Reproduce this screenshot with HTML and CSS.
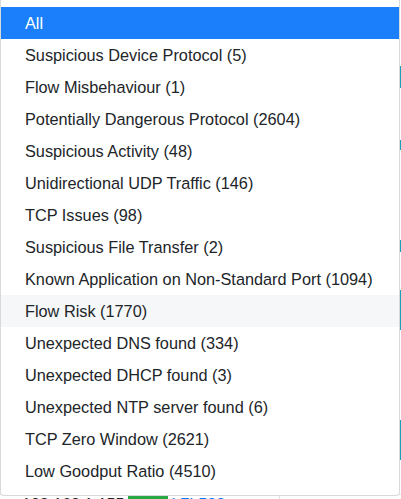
FILE: index.html
```html
<!DOCTYPE html>
<html>
<head>
<meta charset="utf-8">
<link rel="stylesheet" href="styles.css">
</head>
<body>
<div class="page">
  <div class="edge-right">
    <span class="tick t1"></span><span class="tick t2"></span><span class="tick t3"></span><span class="tick t4"></span><span class="tick t5"></span>
  </div>
  <div class="bottom-row">
    <span class="ip">192.168.1.155</span>
    <span class="badge">Local</span>
    <span class="mac">b7b533</span>
    <span class="sep"></span>
  </div>
</div>
<div class="menu">
  <div class="item active">All</div>
  <div class="item">Suspicious Device Protocol (5)</div>
  <div class="item">Flow Misbehaviour (1)</div>
  <div class="item">Potentially Dangerous Protocol (2604)</div>
  <div class="item">Suspicious Activity (48)</div>
  <div class="item">Unidirectional UDP Traffic (146)</div>
  <div class="item">TCP Issues (98)</div>
  <div class="item">Suspicious File Transfer (2)</div>
  <div class="item">Known Application on Non-Standard Port (1094)</div>
  <div class="item hover">Flow Risk (1770)</div>
  <div class="item">Unexpected DNS found (334)</div>
  <div class="item">Unexpected DHCP found (3)</div>
  <div class="item">Unexpected NTP server found (6)</div>
  <div class="item">TCP Zero Window (2621)</div>
  <div class="item">Low Goodput Ratio (4510)</div>
</div>
</body>
</html>
```
FILE: styles.css
```css
html, body {
  margin: 0;
  padding: 0;
  background: #ffffff;
  overflow: hidden;
}
body {
  width: 401px;
  height: 499px;
  position: relative;
  font-family: "Liberation Sans", Arial, sans-serif;
  color: #212529;
}
.page {
  position: relative;
  width: 401px;
  height: 499px;
}
.edge-right {
  position: absolute;
  left: 400px;
  top: 0;
  width: 1px;
  height: 499px;
}
.tick {
  position: absolute;
  left: 0;
  width: 1px;
  background: #17a2b8;
}
.t1 { top: 66px; height: 22px; }
.t2 { top: 140px; height: 10px; }
.t3 { top: 240px; height: 12px; }
.t4 { top: 290px; height: 40px; }
.t5 { top: 420px; height: 40px; }
.bottom-row {
  position: absolute;
  left: 0;
  top: 494px;
  width: 401px;
  display: flex;
  align-items: center;
  gap: 4px;
  padding-left: 22px;
  font-size: 16px;
  line-height: 20px;
  border-top: 1px solid #dee2e6;
}
.ip { color: #212529; }
.badge {
  background: #28a745;
  color: #fff;
  font-size: 12px;
  padding: 0 4px;
  font-weight: bold;
}
.mac { color: #007bff; }
.sep {
  margin-left: 50px;
  width: 1px;
  height: 20px;
  background: #dee2e6;
}
.menu {
  position: absolute;
  left: 0;
  top: -2px;
  width: 398px;
  padding: 8px 0;
  background: #ffffff;
  border: 1px solid rgba(0, 0, 0, 0.15);
  border-radius: 4px;
  box-sizing: content-box;
}
.item {
  padding: 4px 24px;
  font-size: 16.3px;
  line-height: 24px;
  white-space: nowrap;
  color: #212529;
}
.item.active {
  background: #1b7ffb;
  color: #ffffff;
}
.item.hover {
  background: #f5f7f9;
}
```
